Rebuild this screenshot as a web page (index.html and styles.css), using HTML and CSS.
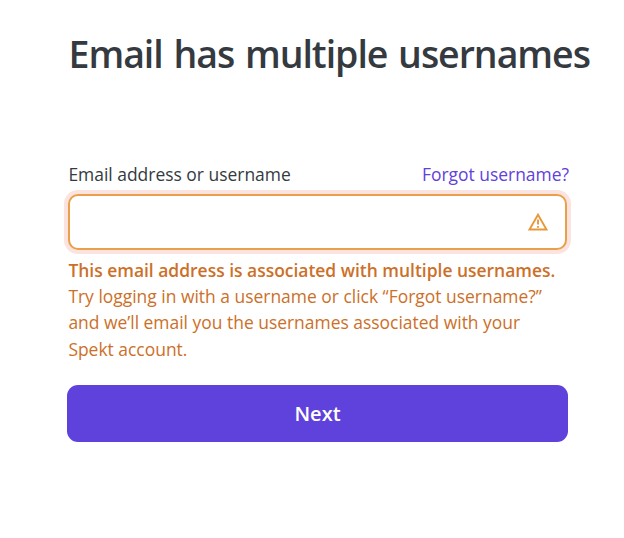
FILE: index.html
```html
<!DOCTYPE html>
<html lang="en">
<head>
    <meta charset="UTF-8">
    <meta name="viewport" content="width=device-width, initial-scale=1.0">
    <title>Email has multiple usernames</title>
    <link rel="stylesheet" href="styles.css">
</head>
<body>
    <main class="container">
        <h1>Email has multiple usernames</h1>
        <form class="login-form">
            <div class="label-row">
                <label for="username">Email address or username</label>
                <a class="forgot-link" href="#">Forgot username?</a>
            </div>
            <div class="input-wrap">
                <input type="text" id="username" name="username">
                <svg class="warning-icon" viewBox="0 0 20 18" width="20" height="18" fill="none" stroke="currentColor">
                    <path d="M10 1.7 L18.5 16.5 H1.5 Z" stroke-width="1.9"/>
                    <path d="M10 6.6 V11.6 M10 12.9 V14.8" stroke-width="1.9"/>
                </svg>
            </div>
            <p class="error-text">
                <strong>This email address is associated with multiple usernames.</strong><br>
                Try logging in with a username or click “Forgot username?”<br>
                and we’ll email you the usernames associated with your<br>
                Spekt account.
            </p>
            <button type="submit" class="btn-next">Next</button>
        </form>
    </main>
</body>
</html>
```
FILE: styles.css
```css
* {
    box-sizing: border-box;
}

body {
    font-family: "Open Sans", sans-serif;
    background-color: #ffffff;
    color: #343a40;
    margin: 0;
}

.container {
    padding: 27px 0 0 68px;
}

h1 {
    font-size: 37.5px;
    font-weight: 560;
    line-height: 53px;
    letter-spacing: -1.03px;
    word-spacing: 2px;
    margin: 0 0 81px 0.5px;
    white-space: nowrap;
}

.login-form {
    width: 500px;
}

.label-row {
    display: flex;
    justify-content: space-between;
    font-size: 17.45px;
    line-height: 26px;
    margin-left: 0.4px;
    margin-right: -1px;
    white-space: nowrap;
}

.forgot-link {
    color: #5f41dc;
    text-decoration: none;
}

.input-wrap {
    position: relative;
    width: 499px;
    margin-top: 7px;
}

input {
    display: block;
    width: 100%;
    height: 56px;
    padding: 0 50px 0 16px;
    font: inherit;
    font-size: 18px;
    border: 2px solid #eaa04a;
    border-radius: 10px;
    box-shadow: 0 0 0 4px #fbe4e0;
    outline: none;
}

.warning-icon {
    position: absolute;
    top: 19px;
    right: 19px;
    color: #e8983a;
}

.error-text {
    color: #cc7029;
    font-size: 17.45px;
    line-height: 26.2px;
    margin: 7px 0 23.2px 0.4px;
    white-space: nowrap;
}

.error-text strong {
    font-weight: 600;
}

.btn-next {
    display: block;
    width: 501px;
    height: 57px;
    margin-left: -1px;
    font-family: inherit;
    font-size: 20px;
    font-weight: 600;
    color: #ffffff;
    background-color: #5f41dc;
    border: none;
    border-radius: 11px;
}
```
